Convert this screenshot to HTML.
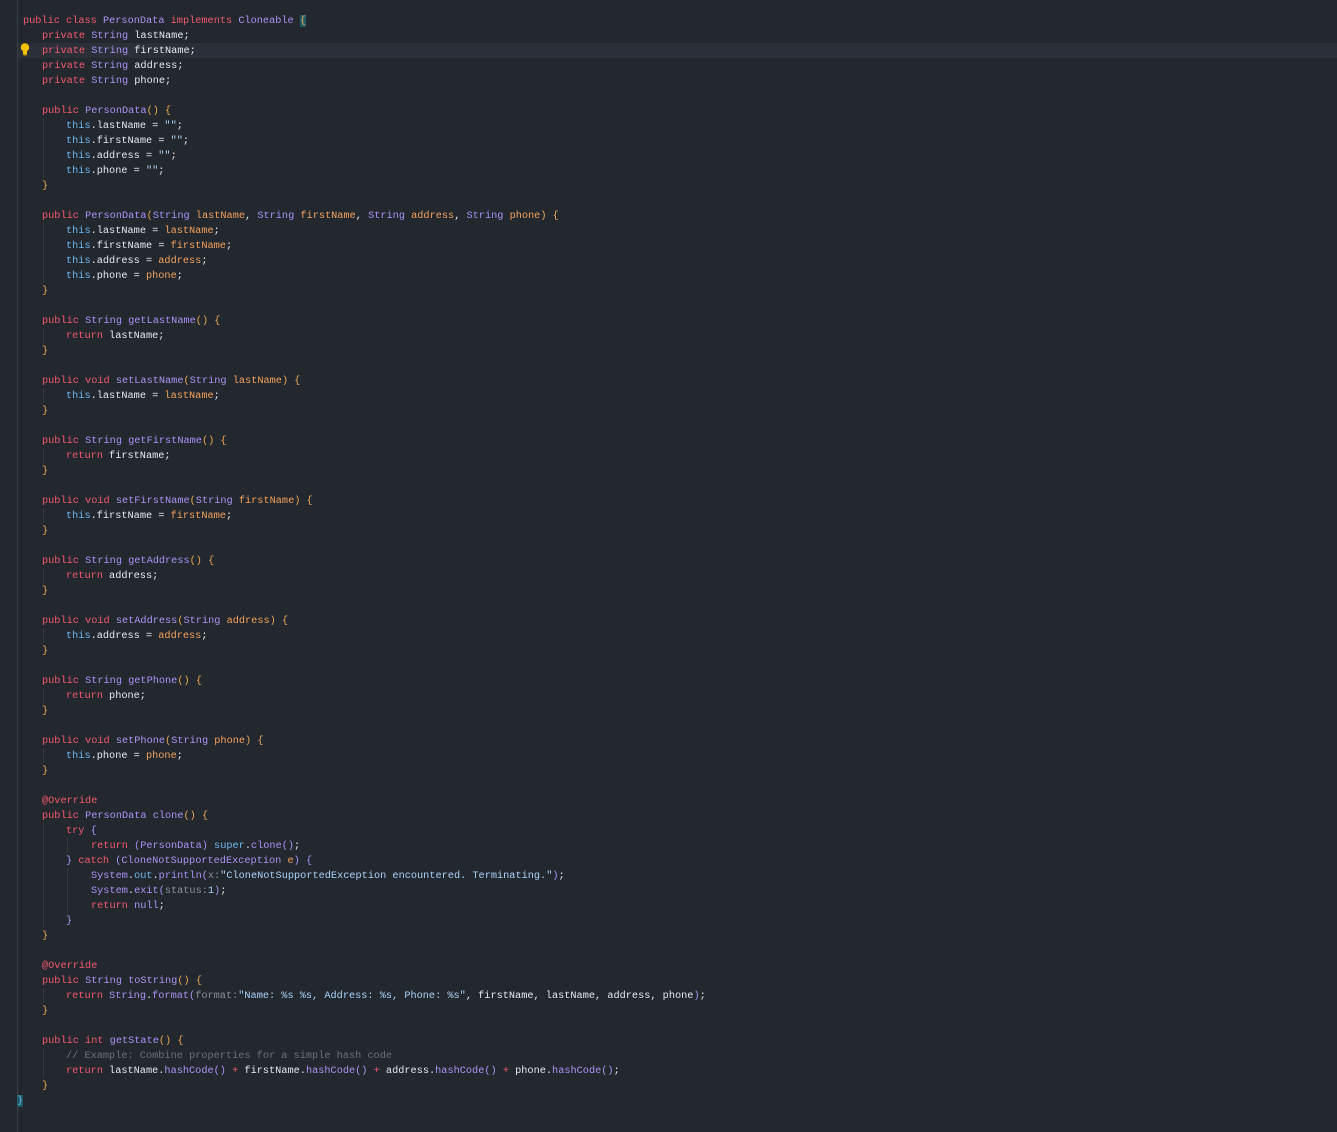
<!DOCTYPE html>
<html><head><meta charset="utf-8"><style>
html,body{margin:0;padding:0;background:#23272e;width:1337px;height:1132px;overflow:hidden}
#g{position:absolute;left:17px;top:0;width:1px;height:1132px;background:#3a3f47}
#hl{position:absolute;left:18px;top:43px;width:1319px;height:15px;background:#2b2f37}
#code{position:absolute;top:14px;left:0;font-family:"Liberation Mono",monospace;font-size:10.25px;line-height:15px;color:#e8eaee;white-space:normal}
#code div{height:15px;white-space:pre}
.l0{padding-left:23px}.l1{padding-left:42px}.l2{padding-left:66px}.l3{padding-left:91px}
.k{color:#f25a6e}.t{color:#a994f5}.m{color:#a994f5}.h{color:#6cb8f2}.p{color:#f3a35f}.b{color:#e9a857}.s{color:#a9d4fb}.c{color:#6a727d}.a{color:#f25a6e}.n{color:#8a9099}.x{color:#a994f5}
.ig{position:absolute;width:1px;background:#343940}
.bulb{position:absolute;left:20px;top:43px;width:10px;height:13px}
</style></head><body>
<div id="g"></div><div id="hl"></div>
<svg class="bulb" viewBox="0 0 10 13"><circle cx="5" cy="4.5" r="4.2" fill="#f2c200"/><rect x="3" y="7" width="4" height="4.5" fill="#f2c200"/><rect x="3.5" y="11.5" width="3" height="1.3" fill="#9a7a00"/></svg>
<div class="ig" style="left:43px;top:118px;height:60px"></div>
<div class="ig" style="left:43px;top:223px;height:60px"></div>
<div class="ig" style="left:43px;top:328px;height:15px"></div>
<div class="ig" style="left:43px;top:388px;height:15px"></div>
<div class="ig" style="left:43px;top:448px;height:15px"></div>
<div class="ig" style="left:43px;top:508px;height:15px"></div>
<div class="ig" style="left:43px;top:568px;height:15px"></div>
<div class="ig" style="left:43px;top:628px;height:15px"></div>
<div class="ig" style="left:43px;top:688px;height:15px"></div>
<div class="ig" style="left:43px;top:748px;height:15px"></div>
<div class="ig" style="left:43px;top:823px;height:105px"></div>
<div class="ig" style="left:67px;top:838px;height:15px"></div>
<div class="ig" style="left:67px;top:868px;height:45px"></div>
<div class="ig" style="left:43px;top:988px;height:15px"></div>
<div class="ig" style="left:43px;top:1048px;height:30px"></div>
<div id="code"><div class="l0"><span class="k">public class</span> <span class="t">PersonData</span> <span class="k">implements</span> <span class="t">Cloneable</span> <span class="b" style="background:#1f5a66">{</span></div><div class="l1"><span class="k">private</span> <span class="t">String</span> lastName;</div><div class="l1"><span class="k">private</span> <span class="t">String</span> firstName;</div><div class="l1"><span class="k">private</span> <span class="t">String</span> address;</div><div class="l1"><span class="k">private</span> <span class="t">String</span> phone;</div><div></div><div class="l1"><span class="k">public</span> <span class="m">PersonData</span><span class="b">()</span> <span class="b">{</span></div><div class="l2"><span class="h">this</span>.lastName = <span class="s">""</span>;</div><div class="l2"><span class="h">this</span>.firstName = <span class="s">""</span>;</div><div class="l2"><span class="h">this</span>.address = <span class="s">""</span>;</div><div class="l2"><span class="h">this</span>.phone = <span class="s">""</span>;</div><div class="l1"><span class="b">}</span></div><div></div><div class="l1"><span class="k">public</span> <span class="m">PersonData</span><span class="b">(</span><span class="t">String</span> <span class="p">lastName</span>, <span class="t">String</span> <span class="p">firstName</span>, <span class="t">String</span> <span class="p">address</span>, <span class="t">String</span> <span class="p">phone</span><span class="b">)</span> <span class="b">{</span></div><div class="l2"><span class="h">this</span>.lastName = <span class="p">lastName</span>;</div><div class="l2"><span class="h">this</span>.firstName = <span class="p">firstName</span>;</div><div class="l2"><span class="h">this</span>.address = <span class="p">address</span>;</div><div class="l2"><span class="h">this</span>.phone = <span class="p">phone</span>;</div><div class="l1"><span class="b">}</span></div><div></div><div class="l1"><span class="k">public</span> <span class="t">String</span> <span class="m">getLastName</span><span class="b">()</span> <span class="b">{</span></div><div class="l2"><span class="k">return</span> lastName;</div><div class="l1"><span class="b">}</span></div><div></div><div class="l1"><span class="k">public void</span> <span class="m">setLastName</span><span class="b">(</span><span class="t">String</span> <span class="p">lastName</span><span class="b">)</span> <span class="b">{</span></div><div class="l2"><span class="h">this</span>.lastName = <span class="p">lastName</span>;</div><div class="l1"><span class="b">}</span></div><div></div><div class="l1"><span class="k">public</span> <span class="t">String</span> <span class="m">getFirstName</span><span class="b">()</span> <span class="b">{</span></div><div class="l2"><span class="k">return</span> firstName;</div><div class="l1"><span class="b">}</span></div><div></div><div class="l1"><span class="k">public void</span> <span class="m">setFirstName</span><span class="b">(</span><span class="t">String</span> <span class="p">firstName</span><span class="b">)</span> <span class="b">{</span></div><div class="l2"><span class="h">this</span>.firstName = <span class="p">firstName</span>;</div><div class="l1"><span class="b">}</span></div><div></div><div class="l1"><span class="k">public</span> <span class="t">String</span> <span class="m">getAddress</span><span class="b">()</span> <span class="b">{</span></div><div class="l2"><span class="k">return</span> address;</div><div class="l1"><span class="b">}</span></div><div></div><div class="l1"><span class="k">public void</span> <span class="m">setAddress</span><span class="b">(</span><span class="t">String</span> <span class="p">address</span><span class="b">)</span> <span class="b">{</span></div><div class="l2"><span class="h">this</span>.address = <span class="p">address</span>;</div><div class="l1"><span class="b">}</span></div><div></div><div class="l1"><span class="k">public</span> <span class="t">String</span> <span class="m">getPhone</span><span class="b">()</span> <span class="b">{</span></div><div class="l2"><span class="k">return</span> phone;</div><div class="l1"><span class="b">}</span></div><div></div><div class="l1"><span class="k">public void</span> <span class="m">setPhone</span><span class="b">(</span><span class="t">String</span> <span class="p">phone</span><span class="b">)</span> <span class="b">{</span></div><div class="l2"><span class="h">this</span>.phone = <span class="p">phone</span>;</div><div class="l1"><span class="b">}</span></div><div></div><div class="l1"><span class="a">@Override</span></div><div class="l1"><span class="k">public</span> <span class="t">PersonData</span> <span class="m">clone</span><span class="b">()</span> <span class="b">{</span></div><div class="l2"><span class="k">try</span> <span class="x">{</span></div><div class="l3"><span class="k">return</span> <span class="x">(</span><span class="t">PersonData</span><span class="x">)</span> <span class="h">super</span>.<span class="m">clone</span><span class="x">()</span>;</div><div class="l2"><span class="x">}</span> <span class="k">catch</span> <span class="x">(</span><span class="t">CloneNotSupportedException</span> <span class="p">e</span><span class="x">)</span> <span class="x">{</span></div><div class="l3"><span class="t">System</span>.<span class="h">out</span>.<span class="m">println</span><span class="x">(</span><span class="n">x:</span><span class="s">"CloneNotSupportedException encountered. Terminating."</span><span class="x">)</span>;</div><div class="l3"><span class="t">System</span>.<span class="m">exit</span><span class="x">(</span><span class="n">status:</span><span class="s">1</span><span class="x">)</span>;</div><div class="l3"><span class="k">return</span> <span class="t">null</span>;</div><div class="l2"><span class="x">}</span></div><div class="l1"><span class="b">}</span></div><div></div><div class="l1"><span class="a">@Override</span></div><div class="l1"><span class="k">public</span> <span class="t">String</span> <span class="m">toString</span><span class="b">()</span> <span class="b">{</span></div><div class="l2"><span class="k">return</span> <span class="t">String</span>.<span class="m">format</span><span class="x">(</span><span class="n">format:</span><span class="s">"Name: %s %s, Address: %s, Phone: %s"</span>, firstName, lastName, address, phone<span class="x">)</span>;</div><div class="l1"><span class="b">}</span></div><div></div><div class="l1"><span class="k">public int</span> <span class="m">getState</span><span class="b">()</span> <span class="b">{</span></div><div class="l2"><span class="c">// Example: Combine properties for a simple hash code</span></div><div class="l2"><span class="k">return</span> lastName.<span class="m">hashCode</span><span class="x">()</span> <span class="k">+</span> firstName.<span class="m">hashCode</span><span class="x">()</span> <span class="k">+</span> address.<span class="m">hashCode</span><span class="x">()</span> <span class="k">+</span> phone.<span class="m">hashCode</span><span class="x">()</span>;</div><div class="l1"><span class="b">}</span></div><div style="padding-left:17px"><span class="b" style="background:#1f5a66;color:#6cb8f2">}</span></div></div>
</body></html>
